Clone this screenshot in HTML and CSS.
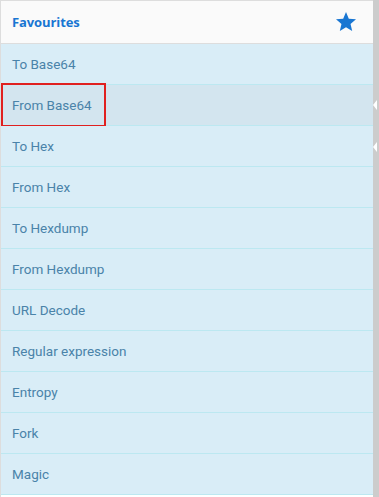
FILE: index.html
```html
<!DOCTYPE html>
<html>
<head>
<meta charset="utf-8">
<link rel="stylesheet" href="styles.css">
</head>
<body>
<div class="page">
  <div class="panel">
    <div class="cat-header">
      <span class="cat-title">Favourites</span>
      <svg class="star" viewBox="0 0 24 24" width="24" height="24"><path d="M12 17.27L18.18 21l-1.64-7.03L22 9.24l-7.19-.61L12 2 9.19 8.63 2 9.24l5.46 4.73L5.82 21z" fill="#1976d2"/></svg>
    </div>
    <ul class="ops">
      <li class="op">To Base64</li>
      <li class="op selected">From Base64<span class="mark"></span></li>
      <li class="op">To Hex</li>
      <li class="op">From Hex</li>
      <li class="op">To Hexdump</li>
      <li class="op">From Hexdump</li>
      <li class="op">URL Decode</li>
      <li class="op">Regular expression</li>
      <li class="op">Entropy</li>
      <li class="op">Fork</li>
      <li class="op">Magic</li>
    </ul>
  </div>
  <div class="gutter">
    <span class="arrow a1"></span>
    <span class="arrow a2"></span>
  </div>
</div>
</body>
</html>
```
FILE: styles.css
```css
html, body {
  margin: 0;
  padding: 0;
  background: #ffffff;
}
.page {
  display: flex;
  width: 379px;
  height: 497px;
  overflow: hidden;
  font-family: "Open Sans", "Noto Sans", sans-serif;
}
.panel {
  flex: 1;
  border-left: 1px solid #dddddd;
  border-top: 1px solid #dddddd;
  min-width: 0;
}
.cat-header {
  box-sizing: border-box;
  background: #fafafa;
  border-bottom: 1px solid #dddddd;
  display: flex;
  align-items: center;
  justify-content: space-between;
  padding: 0 15px 0 11px;
  height: 43px;
}
.cat-title {
  font-weight: bold;
  font-size: 13px;
  color: #1976d2;
  letter-spacing: -0.1px;
}
.star {
  display: block;
  margin-top: -1px;
}
.ops {
  list-style: none;
  margin: 0;
  padding: 0;
}
.op {
  position: relative;
  height: 40px;
  border-bottom: 1px solid #bce8f1;
  background: #d9edf7;
  color: #4a83a9;
  font-family: "Roboto", "Open Sans", sans-serif;
  font-size: 13.5px;
  display: flex;
  align-items: center;
  padding-left: 11px;
}
.op.selected {
  background: #d3e5ef;
}
.mark {
  position: absolute;
  left: 0;
  top: -2px;
  width: 105px;
  height: 44px;
  box-sizing: border-box;
  border: 2px solid #e0201f;
}
.gutter {
  position: relative;
  width: 6px;
  background: #cccccc;
  flex: none;
}
.arrow {
  position: absolute;
  left: 0;
  width: 0;
  height: 0;
  border-top: 5px solid transparent;
  border-bottom: 5px solid transparent;
  border-right: 4px solid #ffffff;
}
.a1 { top: 100px; }
.a2 { top: 142px; }
```
